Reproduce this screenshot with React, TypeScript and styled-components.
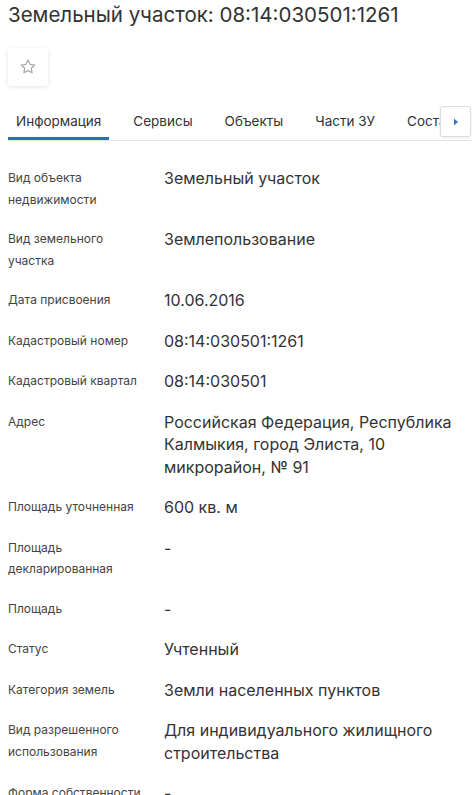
import { memo } from 'react';
import styled, { createGlobalStyle } from 'styled-components';

const GlobalStyle = createGlobalStyle`
  html, body {
    margin: 0;
    padding: 0;
    background: #fff;
  }
  body {
    font-family: Inter, 'Liberation Sans', Arial, sans-serif;
    color: #333;
  }
`;

interface Field {
  label: string;
  value: string;
}

const tabs = ['Информация', 'Сервисы', 'Объекты', 'Части ЗУ', 'Состав'];

const fields: Field[] = [
  { label: 'Вид объекта недвижимости', value: 'Земельный участок' },
  { label: 'Вид земельного участка', value: 'Землепользование' },
  { label: 'Дата присвоения', value: '10.06.2016' },
  { label: 'Кадастровый номер', value: '08:14:030501:1261' },
  { label: 'Кадастровый квартал', value: '08:14:030501' },
  {
    label: 'Адрес',
    value: 'Российская Федерация, Республика Калмыкия, город Элиста, 10 микрорайон, № 91',
  },
  { label: 'Площадь уточненная', value: '600 кв. м' },
  { label: 'Площадь декларированная', value: '-' },
  { label: 'Площадь', value: '-' },
  { label: 'Статус', value: 'Учтенный' },
  { label: 'Категория земель', value: 'Земли населенных пунктов' },
  { label: 'Вид разрешенного использования', value: 'Для индивидуального жилищного строительства' },
  { label: 'Форма собственности', value: '-' },
];

function App() {
  return (
    <Page>
      <GlobalStyle />
      <Title>Земельный участок: 08:14:030501:1261</Title>
      <StarButton type="button" aria-label="В избранное">
        <svg width="18" height="18" viewBox="0 0 24 24" fill="none">
          <path
            d="M12 2.8l2.75 5.6 6.15.9-4.45 4.35 1.05 6.12L12 16.87l-5.5 2.9 1.05-6.12L3.1 9.3l6.15-.9L12 2.8z"
            stroke="#a9a9a9"
            strokeWidth="1.6"
            strokeLinejoin="round"
          />
        </svg>
      </StarButton>
      <TabBar>
        <TabList>
          {tabs.map((t, i) => (
            <Tab key={t} $active={i === 0}>
              {t}
            </Tab>
          ))}
        </TabList>
        <ScrollButton type="button" aria-label="Далее">
          <svg width="8" height="10" viewBox="0 0 8 10">
            <path d="M2 1.5l4 3.5-4 3.5z" fill="#2e7bbf" />
          </svg>
        </ScrollButton>
      </TabBar>
      <Fields>
        {fields.map((f) => (
          <Row key={f.label}>
            <Label>{f.label}</Label>
            <Value>{f.value}</Value>
          </Row>
        ))}
      </Fields>
    </Page>
  );
}

const Page = styled.div`
  padding: 0 8px;
  height: 795px;
  overflow: hidden;
`;

const Title = styled.h1`
  margin: 0;
  padding-top: 3px;
  font-size: 20.5px;
  line-height: 24px;
  font-weight: 400;
  color: #333;
  white-space: nowrap;
`;

const StarButton = styled.button`
  margin-top: 21px;
  width: 40px;
  height: 38px;
  display: flex;
  align-items: center;
  justify-content: center;
  padding: 0;
  border: none;
  border-radius: 3px;
  background: #fff;
  box-shadow: 0 1px 4px rgba(0, 0, 0, 0.12);
  cursor: pointer;
`;

const TabBar = styled.div`
  position: relative;
  margin-top: 20px;
  margin-right: -8px;
  border-bottom: 1px solid #e6e6e6;
  overflow: hidden;
`;

const TabList = styled.div`
  display: flex;
  gap: 16px;
  white-space: nowrap;
`;

const Tab = styled.div<{ $active?: boolean }>`
  flex: none;
  padding: 0 8px;
  height: 34px;
  line-height: 30px;
  font-size: 13.5px;
  color: #333;
  border-bottom: 3px solid ${(p) => (p.$active ? '#2a70b2' : 'transparent')};
  box-sizing: border-box;
`;

const ScrollButton = styled.button`
  position: absolute;
  right: 1px;
  top: 0;
  width: 31px;
  height: 31px;
  padding: 0;
  display: flex;
  align-items: center;
  justify-content: center;
  background: #fff;
  border: 1px solid #dcdcdc;
  border-radius: 3px;
  box-shadow: 0 1px 3px rgba(0, 0, 0, 0.08);
`;

const Fields = styled.div`
  margin-top: 26px;
  display: flex;
  flex-direction: column;
  gap: 18px;
`;

const Row = styled.div`
  display: grid;
  grid-template-columns: 156px 1fr;
`;

const Label = styled.div`
  font-size: 12px;
  line-height: 21.5px;
  color: #444;
  padding-right: 16px;
`;

const Value = styled.div`
  font-size: 16px;
  line-height: 22.5px;
  color: #333;
`;

export default memo(App);
